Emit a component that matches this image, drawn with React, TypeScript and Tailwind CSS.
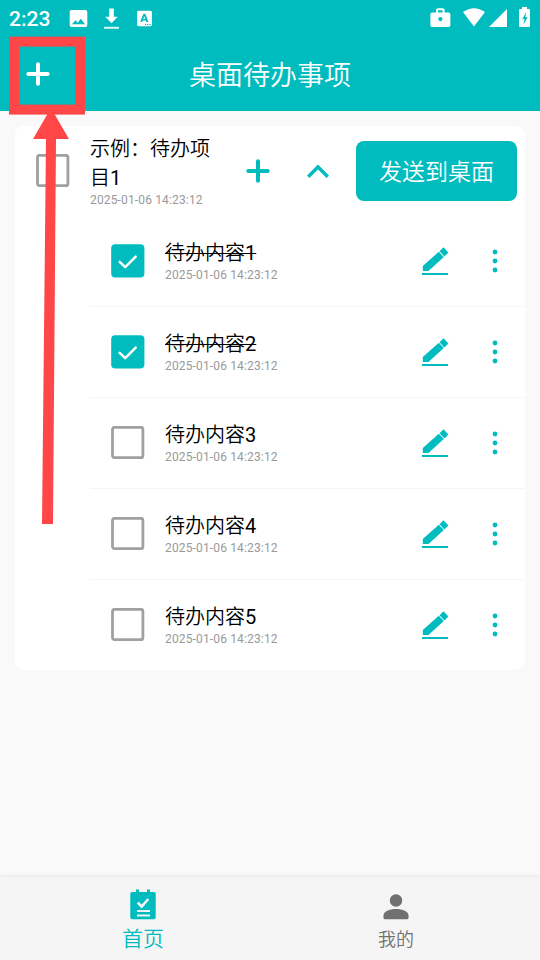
import React from "react";

const STAMP = "2025-01-06 14:23:12";

const items = [
  { id: 1, done: true },
  { id: 2, done: true },
  { id: 3, done: false },
  { id: 4, done: false },
  { id: 5, done: false },
];

function StatusBar() {
  return (
    <div className="flex h-[36px] items-center text-white">
      <span className="ml-[9px] w-[60px] text-[21px] font-medium leading-[36px] pt-[2px]">2:23</span>
      <svg className="h-[36px] w-[90px] shrink-0" viewBox="69 0 90 36" fill="currentColor">
        <path fillRule="evenodd" d="M71.5 10h14a1.800 1.800 0 0 1 1.800 1.800v13.400a1.800 1.800 0 0 1-1.800 1.800h-14a1.800 1.800 0 0 1-1.800-1.800V11.800a1.800 1.800 0 0 1 1.800-1.800ZM72 24.200h13l-4.200-5.400-3.100 4-2.200-2.600Z" />
        <path d="M109.200 8.500h4.600v8.200h4l-6.300 6.600-6.300-6.600h4Z" />
        <path d="M104 26.800h15v2h-15z" opacity=".85" />
        <path fillRule="evenodd" d="M138.500 10.800h12a1.400 1.400 0 0 1 1.400 1.400v12.600a1.400 1.400 0 0 1-1.400 1.400h-12a1.400 1.400 0 0 1-1.400-1.400V12.200a1.400 1.400 0 0 1 1.400-1.400ZM143.400 13.700l-3.200 8.400h2l.6-1.700h3.100l.6 1.700h2l-3.200-8.400Zm-.1 5.200 1-3 1 3ZM145 24h1.200v1H145Zm2.200 0h1.200v1h-1.200Zm2.200 0h1.200v1h-1.200Z" />
      </svg>
      <svg className="ml-auto h-[36px] w-[115px] shrink-0" viewBox="425 0 115 36" fill="currentColor">
        <path fillRule="evenodd" d="M436 12.500v-2.200a2 2 0 0 1 2-2h4.600a2 2 0 0 1 2 2v2.200h4a1.800 1.800 0 0 1 1.800 1.800v11a1.800 1.800 0 0 1-1.800 1.800h-16.400a1.800 1.800 0 0 1-1.800-1.800v-11a1.800 1.800 0 0 1 1.800-1.800Zm2 0h4.600v-2.200H438Zm2.400 4.500a2.100 2.100 0 1 0 0 4.200 2.100 2.100 0 0 0 0-4.200Z" />
        <path d="M463 12q11-7.600 22 0L474 26.500Z" />
        <path d="M507 9v18h-18Z" />
        <path fillRule="evenodd" d="M522 7h5v2h1.800q1.200 0 1.200 1.200v15.600q0 1.200-1.200 1.200h-8.600q-1.200 0-1.200-1.200V10.200q0-1.200 1.200-1.200h1.800Zm4.300 5-4 7h2.200l-1 5.500 4.200-7.300h-2.300Z" />
      </svg>
    </div>
  );
}

function Plus({ className }: { className: string }) {
  return (
    <svg className={className} viewBox="0 0 24 24" fill="none" stroke="currentColor" strokeWidth="4" strokeLinecap="round">
      <path d="M12 2.300v19.400M2.300 12h19.400" />
    </svg>
  );
}

function Checkbox({ checked }: { checked: boolean }) {
  return (
    <svg className="size-[34px] shrink-0" viewBox="0 0 34 34" fill="none">
      {checked ? (
        <>
          <rect x=".2" y=".2" width="33.200" height="33.200" rx="4" fill="#00BCBE" />
          <path d="m8.700 17.800 5.500 5.400L24.700 12.700" stroke="#fff" strokeWidth="2.500" strokeLinecap="round" strokeLinejoin="round" />
        </>
      ) : (
        <rect x="1.500" y="1.300" width="30.400" height="30.400" rx="2" stroke="#a0a0a0" strokeWidth="2.800" />
      )}
    </svg>
  );
}

function Pencil() {
  return (
    <svg className="h-[30px] w-[28px] shrink-0" viewBox="421 246 28 30" fill="#00BCBE">
      <path d="M422 273h26v2h-26z" />
      <path d="m443.500 247.200 4.900 5.200-4 4-4.900-5.200ZM438.800 251.800l5 5.200-15.300 13.900h-5.700v-5Z" />
    </svg>
  );
}

function Dots() {
  return (
    <svg className="h-[24px] w-[6px] shrink-0" viewBox="0 0 6 24" fill="#00BCBE">
      <circle cx="3" cy="3" r="2.400" />
      <circle cx="3" cy="12" r="2.400" />
      <circle cx="3" cy="21" r="2.400" />
    </svg>
  );
}

function TodoRow({ id, done }: { id: number; done: boolean }) {
  return (
    <li className="ml-[75px] flex h-[91px] items-center border-b border-[#f5f5f5] pl-[21px] last:h-[90px] last:border-b-0">
      <Checkbox checked={done} />
      <div className="ml-5 flex-1">
        <p className={`text-[20px] leading-[28px] text-black ${done ? "line-through decoration-1" : ""}`}>
          <span className="font-[350]">待办内容</span>{id}
        </p>
        <p className="text-[12px] leading-[16px] tracking-[0.15px] text-[#999]">{STAMP}</p>
      </div>
      <Pencil />
      <div className="ml-[43px] mr-[27px] flex">
        <Dots />
      </div>
    </li>
  );
}

export default function App() {
  return (
    <div className="relative flex h-[960px] w-[540px] flex-col overflow-hidden bg-[#f9f9f9] font-[Roboto,'Noto_Sans_CJK_SC',sans-serif]">
      <header className="h-[111px] shrink-0 bg-[#00BCBE] text-white">
        <StatusBar />
        <div className="grid h-[75px] grid-cols-[76px_1fr_76px] items-center">
          <Plus className="ml-[26px] size-6" />
          <h1 className="pt-[5px] text-center text-[27px] font-[350] leading-[36px]">桌面待办事项</h1>
        </div>
      </header>

      <main className="flex-1 px-[15px] pt-[15px]">
        <section className="h-[544px] rounded-[9px] bg-white">
          <div className="flex h-[90px] items-center pl-[21px] pr-2">
            <Checkbox checked={false} />
            <div className="ml-5 w-[130px]">
              <h2 className="pt-px text-[20px] leading-[29px] text-black">
                <span className="font-[350]">示例：待办项<br />目</span>1
              </h2>
              <p className="-mt-px text-[12px] leading-[16px] tracking-[0.15px] text-[#999]">{STAMP}</p>
            </div>
            <Plus className="ml-[26px] size-6 text-[#00BCBE]" />
            <svg className="ml-[36px] h-6 w-6" viewBox="0 0 24 24" fill="none" stroke="#00BCBE" strokeWidth="3.400">
              <path d="m2.200 17.800 9.800-9.800 9.800 9.800" />
            </svg>
            <button className="ml-auto h-[60px] w-[161px] rounded-[8px] bg-[#00BCBE] pt-[5px] text-[23px] font-[350] text-white">发送到桌面</button>
          </div>
          <ul>
            {items.map((item) => (
              <TodoRow key={item.id} id={item.id} done={item.done} />
            ))}
          </ul>
        </section>
      </main>

      <nav className="flex h-[83px] shrink-0 bg-[#f5f5f5] px-[16.5px] shadow-[0_-1px_3px_rgba(0,0,0,0.09)]">
        <div className="flex w-[253px] flex-col items-center pt-3 text-[#00BCBE]">
          <svg className="h-[31px] w-[26px]" viewBox="130 889 26 31" fill="#00BCBE">
            <path d="M132 892h4v-2.500h3v2.500h8v-2.500h3v2.500h4q1.700 0 1.700 1.700V917.500q0 1.700-1.700 1.700h-22q-1.700 0-1.700-1.700V893.700q0-1.700 1.700-1.700Z" />
            <path d="m137.700 902.500 4 4 6.600-7.500" fill="none" stroke="#f5f5f5" strokeWidth="2.600" />
            <path d="M137 910h13v2h-13zM137 914.500h13v2h-13z" fill="#f5f5f5" />
          </svg>
          <span className="mt-[4px] text-[21px] font-[350] leading-[30px]">首页</span>
        </div>
        <div className="flex w-[253px] flex-col items-center pt-[16px] text-[#707070]">
          <svg className="h-[27px] w-[26px]" viewBox="0 0 26 27" fill="currentColor">
            <circle cx="13" cy="7.500" r="6.200" />
            <path d="M.5 26v-3.500C.5 18.500 6 16 13 16s12.500 2.500 12.500 6.500v2.500q0 1.200-1.200 1.200H1.700Q.5 26.200.5 25Z" />
          </svg>
          <span className="mt-[6px] text-[18px] font-[350] leading-[28px]">我的</span>
        </div>
      </nav>

      <svg className="pointer-events-none absolute left-0 top-0 h-[540px] w-[120px]" viewBox="0 0 120 540">
        <rect x="14" y="41.600" width="66" height="68" fill="none" stroke="#FF4748" strokeWidth="10" />
        <path d="M51 108 69 139H56L53 524H42L46 139H33Z" fill="#FF4748" />
      </svg>
    </div>
  );
}
